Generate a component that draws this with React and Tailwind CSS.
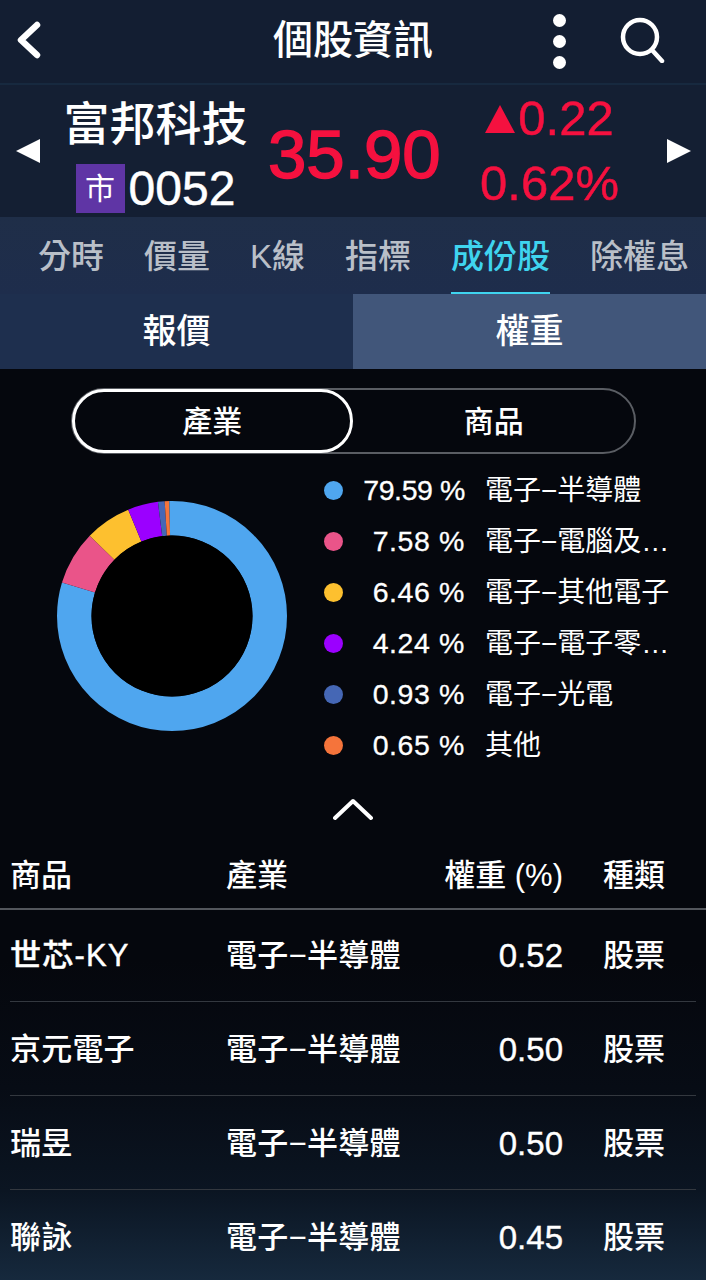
const FONT = 'font-["Liberation_Sans","Noto_Sans_CJK_TC",sans-serif]'

const tabs = ['分時', '價量', 'K線', '指標', '成份股', '除權息']

const legend = [
  ['bg-[#4fa6ef]', '79.59 %', '電子−半導體'],
  ['bg-[#ea5489]', '7.58 %', '電子−電腦及…'],
  ['bg-[#fdc02f]', '6.46 %', '電子−其他電子'],
  ['bg-[#9b00ff]', '4.24 %', '電子−電子零…'],
  ['bg-[#4567b5]', '0.93 %', '電子−光電'],
  ['bg-[#f5743b]', '0.65 %', '其他'],
]

const slices = [
  ['#4fa6ef', 79.59],
  ['#ea5489', 7.58],
  ['#fdc02f', 6.46],
  ['#9b00ff', 4.24],
  ['#4567b5', 0.93],
  ['#f5743b', 0.65],
  ['#4fa6ef', 0.55],
]

const rows = [
  ['世芯-KY', '0.52'],
  ['京元電子', '0.50'],
  ['瑞昱', '0.50'],
  ['聯詠', '0.45'],
]

function Donut() {
  const r = 97.75
  const c = 2 * Math.PI * r
  let offset = 0
  return (
    <svg width="230" height="230" viewBox="0 0 230 230" className="-rotate-90">
      {slices.map(([color, pct]) => {
        const len = (pct / 100) * c
        const el = (
          <circle
            key={color + pct}
            cx="115"
            cy="115"
            r={r}
            fill="none"
            stroke={color}
            strokeWidth="34.5"
            strokeDasharray={`${len} ${c - len}`}
            strokeDashoffset={-offset}
          />
        )
        offset += len
        return el
      })}
      <circle cx="115" cy="115" r="80.5" fill="#000" />
    </svg>
  )
}

export default function App() {
  return (
    <div className={`${FONT} w-[706px] h-[1280px] overflow-hidden text-white bg-[linear-gradient(to_bottom,#05070d_0%,#05070d_75%,#070c15_85%,#0b1522_93%,#16293d_100%)]`}>
      {/* top bar */}
      <div className="h-[85px] flex items-center bg-[#131e32] border-b-2 border-[#17293f] px-4 pb-[4px]">
        <div className="w-[150px]">
          <svg width="26" height="38" viewBox="0 0 26 38" fill="none" stroke="#fff" strokeWidth="6.5" strokeLinecap="round" strokeLinejoin="round">
            <path d="M21 4 L5 19 L21 34" />
          </svg>
        </div>
        <div className="flex-1 text-center text-[40px] leading-none font-medium">個股資訊</div>
        <div className="w-[150px] flex items-center justify-end">
          <div className="flex flex-col gap-[8px] mr-[53px] mt-[3px]">
            <div className="w-[13px] h-[13px] rounded-full bg-white" />
            <div className="w-[13px] h-[13px] rounded-full bg-white" />
            <div className="w-[13px] h-[13px] rounded-full bg-white" />
          </div>
          <svg width="46" height="46" viewBox="0 0 46 46" fill="none" stroke="#fff" strokeWidth="4.5" strokeLinecap="round" className="mr-[25px] shrink-0">
            <circle cx="21" cy="20" r="17" />
            <path d="M33 33 L43 44" />
          </svg>
        </div>
      </div>

      {/* stock bar */}
      <div className="h-[132px] flex items-center bg-[#141f33]">
        <div className="w-0 h-0 ml-4 border-y-[12px] border-y-transparent border-r-[24px] border-r-white" />
        <div className="w-[225px] ml-[3px] self-start mt-[12px] flex flex-col items-center">
          <div className="text-[46px] leading-[54px] font-medium whitespace-nowrap">富邦科技</div>
          <div className="flex items-center mt-[13px]">
            <div className="w-[49px] h-[49px] bg-[#5f35a5] flex items-center justify-center text-[30px] leading-none">市</div>
            <div className="text-[48px] leading-none ml-[4px] [-webkit-text-stroke:0.5px_#fff]">0052</div>
          </div>
        </div>
        <div className="w-[159px] text-center text-[69px] leading-none text-[#f5113f] pt-[6px] [-webkit-text-stroke:1.5px_#f5113f]">35.90</div>
        <div className="w-[240px] pl-[5px] flex flex-col items-center text-[#f5113f] text-[49px] leading-none [-webkit-text-stroke:0.5px_#f5113f]">
          <div className="flex items-center">
            <div className="w-0 h-0 border-x-[15px] border-x-transparent border-b-[28px] border-b-[#f5113f] mr-[3px]" />
            <span>0.22</span>
          </div>
          <div className="mt-[16px]">0.62%</div>
        </div>
        <div className="w-0 h-0 border-y-[12px] border-y-transparent border-l-[24px] border-l-white" />
      </div>

      {/* chart tabs */}
      <div className="h-[77px] pl-[38px] flex gap-[40px] bg-[linear-gradient(to_bottom,#1f2e48,#1e2d4c)] whitespace-nowrap">
        {tabs.map((t) => (
          <div key={t} className={`relative flex items-center pt-[2px] text-[33px] leading-none font-medium ${t === '成份股' ? 'text-[#3fd4ef]' : 'text-[#b9bfc8]'}`}>
            {t}
            {t === '成份股' && <div className="absolute left-0 right-0 bottom-0 h-[2px] bg-[#3fd4ef]" />}
          </div>
        ))}
      </div>

      {/* quote / weight switch */}
      <div className="h-[75px] grid grid-cols-2 text-[34px] font-medium">
        <div className="flex items-center justify-center bg-[#1e2f4e]">報價</div>
        <div className="flex items-center justify-center bg-[#41567a]">權重</div>
      </div>

      {/* pill toggle */}
      <div className="pt-[19px] pl-[71px]">
        <div className="w-[565px] h-[66px] rounded-full border-2 border-[#5a5d63] grid grid-cols-2 text-[30px] font-medium">
          <div className="-ml-[1px] -my-[1px] mr-[1px] rounded-full border-[3px] border-white flex items-center justify-center">產業</div>
          <div className="flex items-center justify-center">商品</div>
        </div>
      </div>

      {/* chart and legend */}
      <div className="flex mt-[11px] h-[382px]">
        <div className="ml-[57px] mt-[36px]">
          <Donut />
        </div>
        <div className="ml-[37px] flex flex-col">
          {legend.map(([dot, pct, name], i) => (
            <div key={name} className="h-[51px] shrink-0 flex items-center text-[28px] leading-none">
              <div className={`w-[19px] h-[19px] rounded-full ${dot}`} />
              <div className={`w-[122px] text-right text-[28.5px] [-webkit-text-stroke:0.3px_#fff] ${i === 0 ? 'tracking-[-0.4px]' : 'tracking-[0.6px]'}`}>{pct}</div>
              <div className="ml-[20px] whitespace-nowrap">{name}</div>
            </div>
          ))}
          <div className="flex justify-start ml-[9px] mt-[26px]">
            <svg width="40" height="24" viewBox="0 0 40 24" fill="none" stroke="#fff" strokeWidth="4" strokeLinecap="round" strokeLinejoin="round">
              <path d="M2 21 L20 4 L38 21" />
            </svg>
          </div>
        </div>
      </div>

      {/* table */}
      <div className="h-[63px] flex items-center px-[10px] text-[31px] leading-none font-medium border-b-2 border-[#53565c] pb-[4px]">
        <div className="w-[216px]">商品</div>
        <div className="w-[176px]">產業</div>
        <div className="w-[161px] text-right whitespace-nowrap">權重 (%)</div>
        <div className="ml-[40px]">種類</div>
      </div>
      <div className="px-[10px] -mt-[2px]">
        {rows.map(([name, w], i) => (
          <div key={name} className={`h-[94px] flex items-center pt-[1px] text-[31px] leading-none font-medium ${i < rows.length - 1 ? 'border-b border-[#33383f]' : ''}`}>
            <div className={`w-[216px] whitespace-nowrap ${i === 0 ? 'tracking-[1.2px] [-webkit-text-stroke:0.4px_#fff]' : 'tracking-[0.2px]'}`}>{name}</div>
            <div className="w-[176px] whitespace-nowrap tracking-[0.3px]">電子−半導體</div>
            <div className="w-[161px] text-right text-[33px] [-webkit-text-stroke:0.4px_#fff]">{w}</div>
            <div className="ml-[40px]">股票</div>
          </div>
        ))}
      </div>
    </div>
  )
}
